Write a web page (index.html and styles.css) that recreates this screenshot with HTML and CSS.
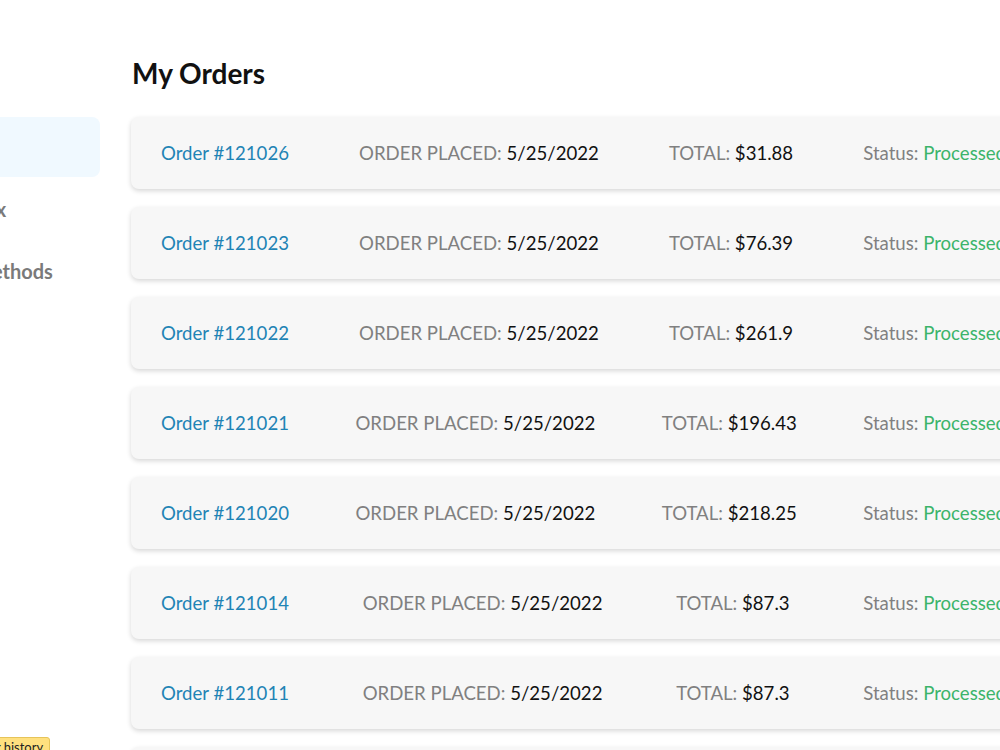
FILE: index.html
```html
<!DOCTYPE html>
<html lang="en">
<head>
<meta charset="UTF-8">
<meta name="viewport" content="width=device-width, initial-scale=1.0">
<title>My Orders</title>
<link rel="stylesheet" href="styles.css">
</head>
<body>
    <div class="layout">
        <aside class="sidebar">
            <a class="side-link active" href="#">Orders</a>
            <a class="side-link" href="#">Orders Inbox</a>
            <a class="side-link" href="#">Payment Methods</a>
        </aside>

        <main class="content">
            <h1>My Orders</h1>

            <div class="order-list">
                <div class="order-card">
                    <a class="order-id" href="#">Order #121026</a>
                    <span class="field"><span class="label">ORDER PLACED:</span> <span class="value">5/25/2022</span></span>
                    <span class="field"><span class="label">TOTAL:</span> <span class="value">$31.88</span></span>
                    <span class="field"><span class="label">Status:</span> <span class="status">Processed</span></span>
                </div>
                <div class="order-card">
                    <a class="order-id" href="#">Order #121023</a>
                    <span class="field"><span class="label">ORDER PLACED:</span> <span class="value">5/25/2022</span></span>
                    <span class="field"><span class="label">TOTAL:</span> <span class="value">$76.39</span></span>
                    <span class="field"><span class="label">Status:</span> <span class="status">Processed</span></span>
                </div>
                <div class="order-card">
                    <a class="order-id" href="#">Order #121022</a>
                    <span class="field"><span class="label">ORDER PLACED:</span> <span class="value">5/25/2022</span></span>
                    <span class="field"><span class="label">TOTAL:</span> <span class="value">$261.9</span></span>
                    <span class="field"><span class="label">Status:</span> <span class="status">Processed</span></span>
                </div>
                <div class="order-card">
                    <a class="order-id" href="#">Order #121021</a>
                    <span class="field"><span class="label">ORDER PLACED:</span> <span class="value">5/25/2022</span></span>
                    <span class="field"><span class="label">TOTAL:</span> <span class="value">$196.43</span></span>
                    <span class="field"><span class="label">Status:</span> <span class="status">Processed</span></span>
                </div>
                <div class="order-card">
                    <a class="order-id" href="#">Order #121020</a>
                    <span class="field"><span class="label">ORDER PLACED:</span> <span class="value">5/25/2022</span></span>
                    <span class="field"><span class="label">TOTAL:</span> <span class="value">$218.25</span></span>
                    <span class="field"><span class="label">Status:</span> <span class="status">Processed</span></span>
                </div>
                <div class="order-card">
                    <a class="order-id" href="#">Order #121014</a>
                    <span class="field"><span class="label">ORDER PLACED:</span> <span class="value">5/25/2022</span></span>
                    <span class="field"><span class="label">TOTAL:</span> <span class="value">$87.3</span></span>
                    <span class="field"><span class="label">Status:</span> <span class="status">Processed</span></span>
                </div>
                <div class="order-card">
                    <a class="order-id" href="#">Order #121011</a>
                    <span class="field"><span class="label">ORDER PLACED:</span> <span class="value">5/25/2022</span></span>
                    <span class="field"><span class="label">TOTAL:</span> <span class="value">$87.3</span></span>
                    <span class="field"><span class="label">Status:</span> <span class="status">Processed</span></span>
                </div>
                <div class="order-card">
                    <a class="order-id" href="#">Order #121008</a>
                    <span class="field"><span class="label">ORDER PLACED:</span> <span class="value">5/24/2022</span></span>
                    <span class="field"><span class="label">TOTAL:</span> <span class="value">$54.1</span></span>
                    <span class="field"><span class="label">Status:</span> <span class="status">Processed</span></span>
                </div>
            </div>
        </main>
    </div>

    <div class="tooltip">Order history</div>
</body>
</html>
```

FILE: styles.css
```css
body {
    font-family: Lato, "Open Sans", sans-serif;
    background-color: #fff;
    color: #111;
    margin: 0;
    overflow: hidden;
}

.layout {
    display: flex;
    margin-left: -150px;
    width: 1200px;
}

/* left menu, partly scrolled out of view */
.sidebar {
    width: 250px;
    flex-shrink: 0;
    padding-top: 117px;
    display: flex;
    flex-direction: column;
    gap: 2px;
}

.side-link {
    display: block;
    height: 60px;
    line-height: 60px;
    padding-left: 40px;
    border-radius: 8px;
    font-size: 20px;
    font-weight: 700;
    color: #7a7a7a;
    text-decoration: none;
}

.side-link.active {
    background-color: #f0f9ff;
    color: #1a84b8;
}

.content {
    padding-left: 31px;
}

h1 {
    font-size: 28px;
    font-weight: 700;
    margin: 55px 0 26px 1px;
    line-height: 36px;
}

.order-list {
    display: flex;
    flex-direction: column;
    gap: 18px;
}

.order-card {
    width: 845px;
    height: 72px;
    padding: 0 30px;
    background-color: #f7f7f7;
    border-radius: 8px;
    box-shadow: 0 2px 5px rgba(0, 0, 0, 0.16);
    display: flex;
    align-items: center;
    justify-content: space-between;
    font-size: 18.6px;
}

.order-id {
    color: #1f84b5;
    text-decoration: none;
}

.label {
    color: #808080;
}

.value {
    color: #111;
}

.status {
    color: #3cb46a;
}

.tooltip {
    position: absolute;
    left: -40px;
    top: 737px;
    padding: 1px 6px 4px;
    background-color: #ffe07f;
    border: 1px solid #e6c45a;
    border-radius: 3px;
    font-size: 13px;
    color: #222;
}
```
